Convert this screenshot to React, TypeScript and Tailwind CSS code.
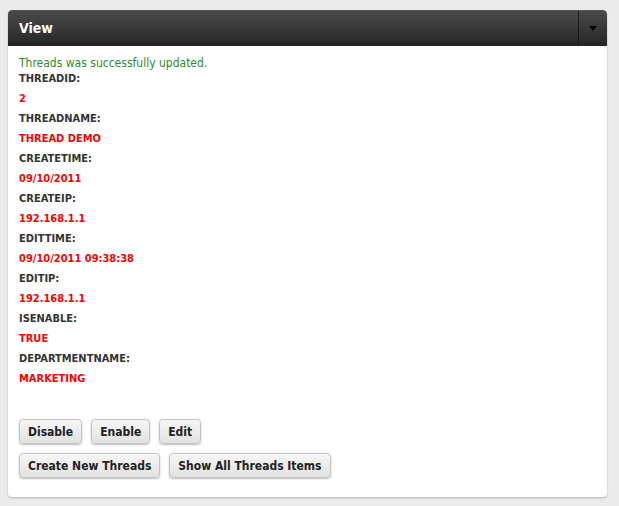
const fields: [string, string][] = [
  ["THREADID:", "2"],
  ["THREADNAME:", "THREAD DEMO"],
  ["CREATETIME:", "09/10/2011"],
  ["CREATEIP:", "192.168.1.1"],
  ["EDITTIME:", "09/10/2011 09:38:38"],
  ["EDITIP:", "192.168.1.1"],
  ["ISENABLE:", "TRUE"],
  ["DEPARTMENTNAME:", "MARKETING"],
];

function Btn({ label }: { label: string }) {
  return (
    <button className="h-[25px] px-[8px] rounded-[4px] border border-[#c4c4c4] bg-gradient-to-b from-[#f7f7f7] to-[#e2e2e2] shadow-[0_1px_2px_rgba(0,0,0,0.25)] text-[12px] font-bold text-[#222]">
      {label}
    </button>
  );
}

export default function App() {
  return (
    <div className="w-[619px] h-[506px] bg-[#ebebeb] pt-[10px] pl-[8px] pr-[12px] font-['DejaVu_Sans_Condensed',sans-serif]">
      <div className="rounded-[4px] bg-white shadow-[0_1px_2px_rgba(0,0,0,0.25)] h-[487px] overflow-hidden">
        {/* header */}
        <div className="h-[36px] flex items-stretch bg-gradient-to-b from-[#4a4a4a] to-[#262626] border-t border-[#555] rounded-t-[4px]">
          <div className="flex-1 flex items-center pl-[11px] text-white font-bold text-[14px]">View</div>
          <div className="w-[29px] border-l border-[#1a1a1a] flex items-center justify-center">
            <div className="w-0 h-0 border-l-[4px] border-r-[4px] border-t-[5px] border-l-transparent border-r-transparent border-t-black" />
          </div>
        </div>
        {/* body */}
        <div className="px-[11px] pt-[12px]">
          <div className="text-[12px] leading-[11px] text-[#2e8b2e]">Threads was successfully updated.</div>
          <div className="flex flex-col">
            {fields.map(([k, v]) => (
              <div key={k} className="flex flex-col">
                <div className="h-[20px] leading-[20px] text-[11px] font-bold text-[#333]">{k}</div>
                <div className="h-[20px] leading-[20px] text-[11px] font-bold text-[#f00]">{v}</div>
              </div>
            ))}
          </div>
          <div className="mt-[30px] flex flex-col gap-[9px]">
            <div className="flex gap-[9px]">
              <Btn label="Disable" />
              <Btn label="Enable" />
              <Btn label="Edit" />
            </div>
            <div className="flex gap-[9px]">
              <Btn label="Create New Threads" />
              <Btn label="Show All Threads Items" />
            </div>
          </div>
        </div>
      </div>
    </div>
  );
}
